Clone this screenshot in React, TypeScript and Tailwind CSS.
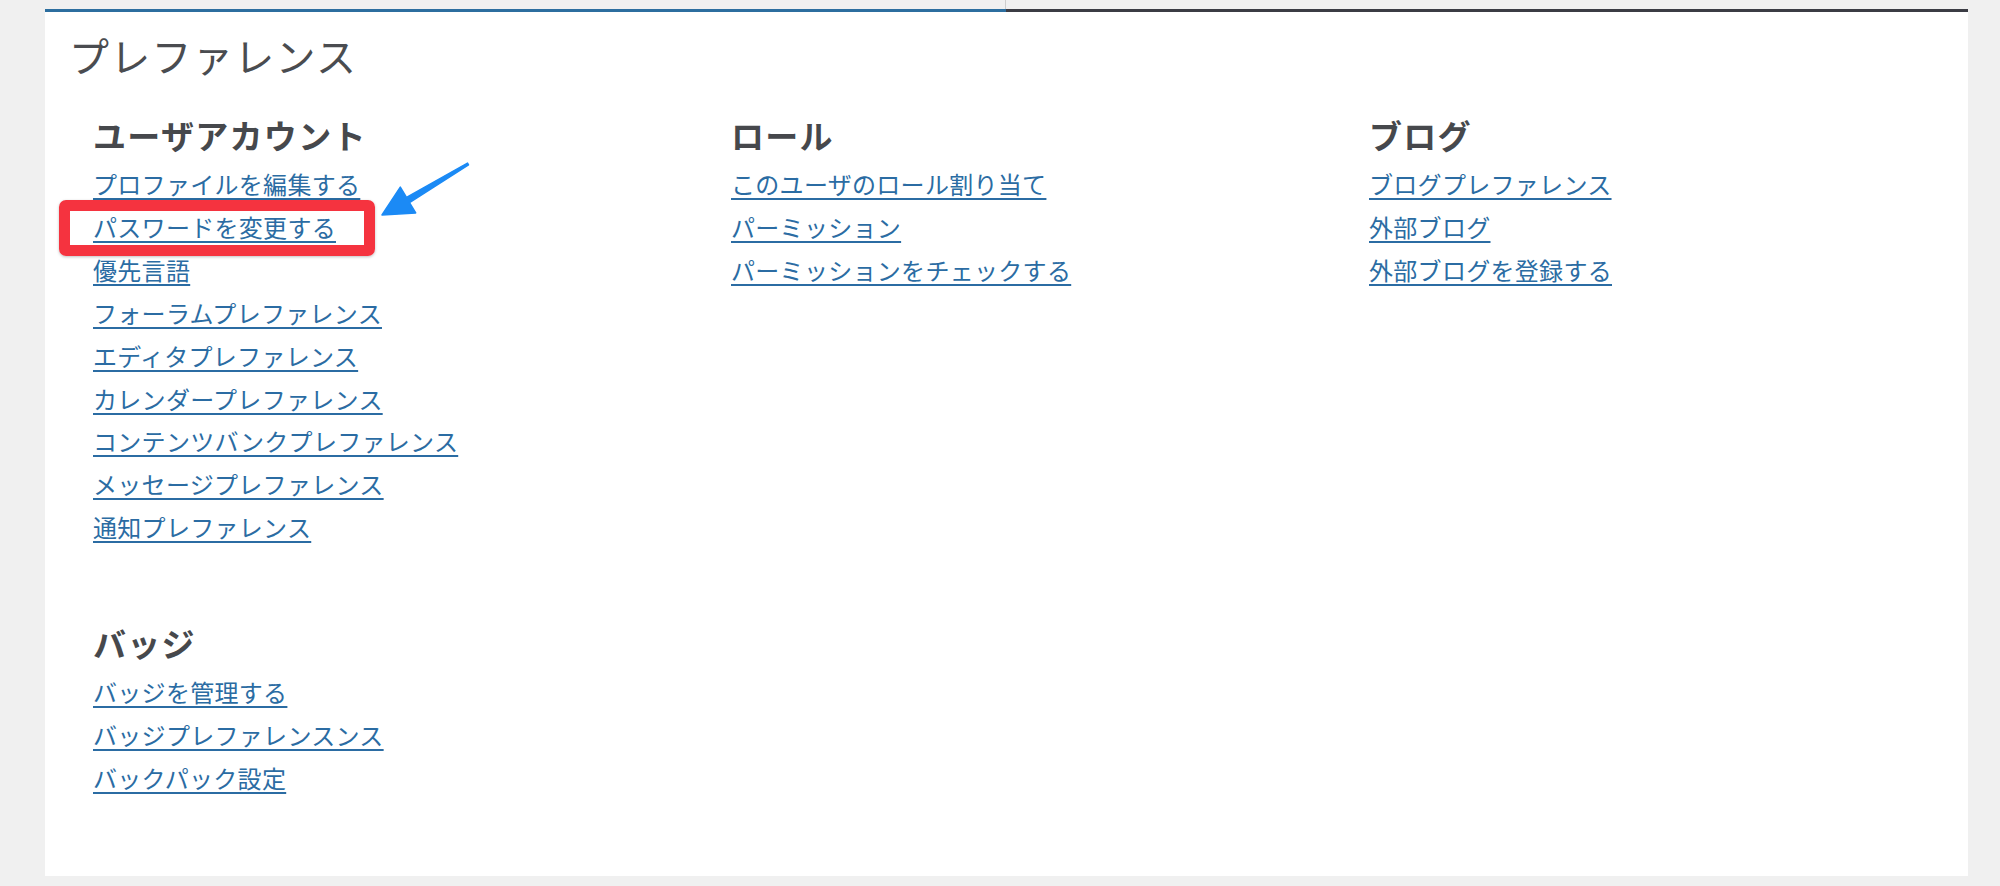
import React from 'react';

type Section = { title: string; links: string[] };

const userAccount: Section = {
  title: 'ユーザアカウント',
  links: [
    'プロファイルを編集する',
    'パスワードを変更する',
    '優先言語',
    'フォーラムプレファレンス',
    'エディタプレファレンス',
    'カレンダープレファレンス',
    'コンテンツバンクプレファレンス',
    'メッセージプレファレンス',
    '通知プレファレンス',
  ],
};

const badges: Section = {
  title: 'バッジ',
  links: ['バッジを管理する', 'バッジプレファレンスンス', 'バックパック設定'],
};

const roles: Section = {
  title: 'ロール',
  links: ['このユーザのロール割り当て', 'パーミッション', 'パーミッションをチェックする'],
};

const blogs: Section = {
  title: 'ブログ',
  links: ['ブログプレファレンス', '外部ブログ', '外部ブログを登録する'],
};

function PrefSection({ section, className = '' }: { section: Section; className?: string }) {
  return (
    <div className={className}>
      <h3 className="text-[33px] leading-[36px] tracking-[1.3px] font-bold text-[#46484c]">{section.title}</h3>
      <ul className="mt-[10px] text-[24px] leading-[42.9px] tracking-[0.3px]">
        {section.links.map((link) => (
          <li key={link}>
            <a href="#" className="text-[#2b6ca3] underline decoration-2 underline-offset-[4px]">
              {link}
            </a>
          </li>
        ))}
      </ul>
    </div>
  );
}

export default function App() {
  return (
    <div
      className="h-[886px] w-full bg-[#f0f0f0] pl-[45px] pr-[32px]"
      style={{ fontFamily: '"Noto Sans CJK JP", "Noto Sans", sans-serif' }}
    >
      {/* tab strip */}
      <div className="flex h-[9px]">
        <div className="w-[961px] border-r border-[#cdcdcd]" />
      </div>
      <div className="flex h-[3px]">
        <div className="w-[961px] bg-[#2c6e9f]" />
        <div className="flex-1 bg-[#3b3c44]" />
      </div>

      {/* panel */}
      <div className="relative h-[864px] bg-white pl-[24px] pt-[19px]">
        <h2 className="text-[40px] leading-[48px] tracking-[1.3px] font-normal text-[#4a4c50]">プレファレンス</h2>

        <div className="mt-[38px] ml-[24px] grid grid-cols-[638px_638px_1fr]">
          <div>
            <PrefSection section={userAccount} />
            <PrefSection section={badges} className="mt-[76px]" />
          </div>
          <PrefSection section={roles} />
          <PrefSection section={blogs} />
        </div>

        {/* annotation: red box */}
        <div className="absolute left-[14px] top-[188px] h-[56px] w-[316px] rounded-[7px] border-[11px] border-[#f5333f] shadow-[0_1px_3px_rgba(0,0,0,0.25)]" />

        {/* annotation: arrow */}
        <svg className="absolute left-[325px] top-[143px]" width="110" height="70" viewBox="0 0 110 70">
          <polygon
            points="12,60 30.3,32.1 36.5,42.4 97.5,8.1 98.5,9.9 39.5,47.6 45.7,57.9"
            fill="#1b8af5"
            stroke="#1b8af5"
            strokeWidth="1.5"
            strokeLinejoin="round"
          />
        </svg>
      </div>
    </div>
  );
}
